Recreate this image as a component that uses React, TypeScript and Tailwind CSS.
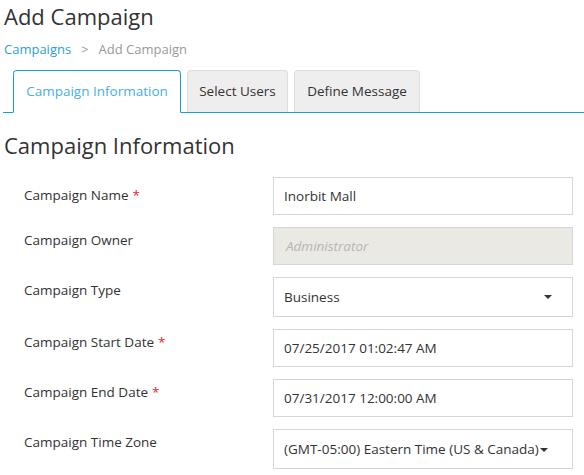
const rows = [
  { label: 'Campaign Name', required: true, kind: 'input', value: 'Inorbit Mall' },
  { label: 'Campaign Owner', required: false, kind: 'disabled', value: 'Administrator' },
  { label: 'Campaign Type', required: false, kind: 'select', value: 'Business' },
  { label: 'Campaign Start Date', required: true, kind: 'input', value: '07/25/2017 01:02:47 AM' },
  { label: 'Campaign End Date', required: true, kind: 'input', value: '07/31/2017 12:00:00 AM' },
  { label: 'Campaign Time Zone', required: false, kind: 'tz', value: '(GMT-05:00) Eastern Time (US & Canada)' },
];

function Caret() {
  return <span className="inline-block w-0 h-0 border-l-[4px] border-r-[4px] border-t-[4px] border-l-transparent border-r-transparent border-t-[#333]" />;
}

function Field({ kind, value }: { kind: string; value: string }) {
  if (kind === 'disabled') {
    return (
      <div className="w-[300px] h-[38px] border border-[#d3d6da] bg-[#ebe9e4] px-[12px] flex items-center text-[13.5px] italic text-[#b5b5b5]">
        {value}
      </div>
    );
  }
  if (kind === 'select') {
    return (
      <div className="w-[300px] h-[40px] border border-[#d3d6da] bg-white pl-[10px] pr-[20px] flex items-center justify-between text-[13.5px] text-[#333]">
        <span>{value}</span>
        <Caret />
      </div>
    );
  }
  if (kind === 'tz') {
    return (
      <div className="w-[300px] h-[40px] border border-[#d3d6da] bg-white pl-[10px] flex items-center text-[13.5px] text-[#333] whitespace-nowrap">
        <span>{value}</span>
        <span className="ml-[1px] mt-[1px] flex"><Caret /></span>
      </div>
    );
  }
  return (
    <div className="w-[300px] h-[38px] border border-[#d3d6da] bg-white px-[10px] flex items-center text-[13.5px] text-[#333]">
      {value}
    </div>
  );
}

export default function App() {
  return (
    <div className="w-[584px] h-[475px] overflow-hidden bg-white text-[#333] font-['Open_Sans','Noto_Sans',sans-serif]">
      <div className="pl-[4px]">
        <h1 className="text-[22px] leading-[30px] pt-[1px] text-[#333]">Add Campaign</h1>
        <div className="mt-[9px] h-[20px] flex items-center text-[13px]">
          <span className="text-[#2a9fd6]">Campaigns</span>
          <span className="mx-[10px] text-[#999]">&gt;</span>
          <span className="text-[#999]">Add Campaign</span>
        </div>
      </div>

      <div className="mt-[10px] ml-[3px] flex items-end border-b border-[#1a9fd5] h-[43px]">
        <div className="ml-[10px] -mb-px h-[43px] w-[168px] border border-[#1a9fd5] border-b-white bg-white rounded-t-[4px] flex items-center justify-center text-[13.5px] text-[#4aaee0]">
          Campaign Information
        </div>
        <div className="ml-[6px] h-[42px] w-[101px] border border-[#ddd] border-b-0 bg-[#eee] rounded-t-[4px] flex items-center justify-center text-[13.5px] text-[#333]">
          Select Users
        </div>
        <div className="ml-[6px] h-[42px] w-[126px] border border-[#ddd] border-b-0 bg-[#eee] rounded-t-[4px] flex items-center justify-center text-[13.5px] text-[#333]">
          Define Message
        </div>
      </div>

      <h2 className="pl-[4px] mt-[16px] text-[22px] leading-[32px] text-[#333]">Campaign Information</h2>

      <div className="mt-[16px] flex flex-col gap-[12px]">
        {rows.map((r, i) => (
          <div key={r.label} className="flex">
            <div className={`w-[273px] pl-[24px] text-[13.5px] text-[#333] ${i === 0 ? 'pt-[8px]' : 'pt-[3px]'}`}>
              {r.label}
              {r.required && <span className="ml-[4px] text-[#e8222c]">*</span>}
            </div>
            <Field kind={r.kind} value={r.value} />
          </div>
        ))}
      </div>
    </div>
  );
}
